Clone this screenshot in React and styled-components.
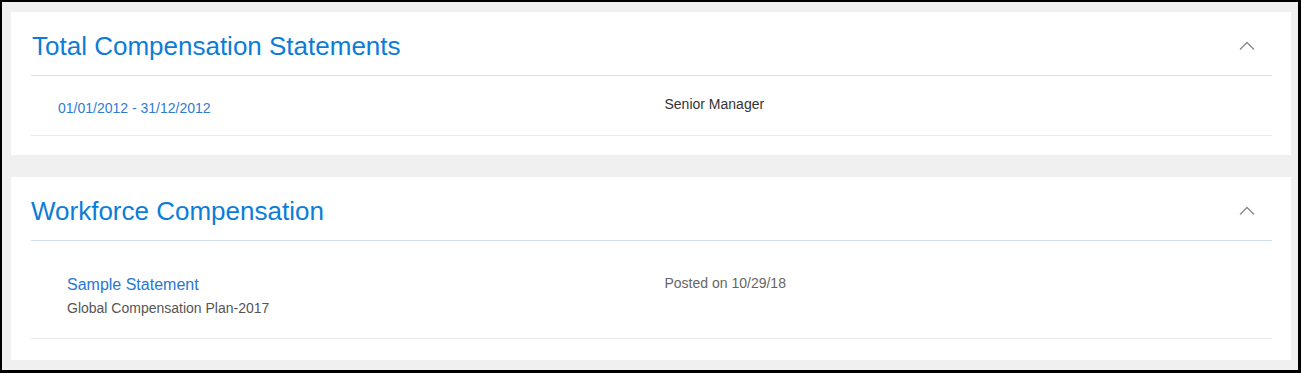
import React from "react";
import styled, { createGlobalStyle } from "styled-components";

const Global = createGlobalStyle`
  html, body { margin: 0; padding: 0; background: #000; }
  body { font-family: "Liberation Sans", Arial, sans-serif; }
  * { box-sizing: border-box; }
`;

const Frame = styled.div`
  width: 1301px;
  height: 373px;
  border-style: solid;
  border-color: #000;
  border-width: 2px 3px 3px 2px;
  background: #f0f0f0;
  padding: 10px 7px 11px 9px;
  display: flex;
  flex-direction: column;
  gap: 22px;
  overflow: hidden;
`;

const Card = styled.section`
  background: #fff;
  padding: 0 19px ${(p) => p.$bottom}px 20px;
  display: flex;
  flex-direction: column;
`;

const Header = styled.div`
  display: flex;
  align-items: center;
  justify-content: space-between;
  padding: 19px 0 14px 0;
  border-bottom: 1px solid ${(p) => p.$line};
`;

const Title = styled.h2`
  margin: 0;
  font-weight: normal;
  font-size: 26px;
  line-height: 30px;
  color: #0b7dd8;
  padding-left: ${(p) => p.$indent || 0}px;
`;

const Toggle = styled.button`
  border: 0;
  background: transparent;
  padding: 0;
  margin-right: 17px;
  width: 16px;
  height: 10px;
  display: flex;
  align-items: center;
  justify-content: center;
  cursor: pointer;
`;

const Row = styled.div`
  display: grid;
  grid-template-columns: 1fr 1fr;
  column-gap: 26px;
  border-bottom: 1px solid #e8ebee;
  min-height: ${(p) => p.$height}px;
`;

const Cell = styled.div`
  padding-top: ${(p) => p.$top}px;
  padding-left: ${(p) => p.$left || 0}px;
  display: flex;
  flex-direction: column;
`;

const Link = styled.a`
  color: ${(p) => (p.$size === 16 ? "#2777d2" : "#2f7bd2")};
  font-size: ${(p) => p.$size}px;
  line-height: ${(p) => (p.$size === 16 ? 22 : 20)}px;
  text-decoration: none;
  cursor: pointer;
`;

const Text = styled.div`
  font-size: 14px;
  line-height: 20px;
  color: ${(p) => p.$color};
  margin-top: ${(p) => p.$mt || 0}px;
`;

const Chevron = () => (
  <svg width="16" height="10" viewBox="0 0 16 10">
    <polyline
      points="1,8.5 8,1.5 15,8.5"
      fill="none"
      stroke="#8a8a8a"
      strokeWidth="1.4"
    />
  </svg>
);

export default function App() {
  return (
    <>
      <Global />
      <Frame>
        <Card $bottom={19}>
          <Header $line="#d8dfe6">
            <Title $indent={1}>Total Compensation Statements</Title>
            <Toggle aria-label="Collapse">
              <Chevron />
            </Toggle>
          </Header>
          <Row $height={60}>
            <Cell $top={22} $left={27}>
              <Link $size={14}>01/01/2012 - 31/12/2012</Link>
            </Cell>
            <Cell $top={18}>
              <Text $color="#333">Senior Manager</Text>
            </Cell>
          </Row>
        </Card>
        <Card $bottom={21}>
          <Header $line="#cfdfea">
            <Title>Workforce Compensation</Title>
            <Toggle aria-label="Collapse">
              <Chevron />
            </Toggle>
          </Header>
          <Row $height={98}>
            <Cell $top={33} $left={36}>
              <Link $size={16}>Sample Statement</Link>
              <Text $color="#555" $mt={2}>Global Compensation Plan-2017</Text>
            </Cell>
            <Cell $top={32}>
              <Text $color="#666">Posted on 10/29/18</Text>
            </Cell>
          </Row>
        </Card>
      </Frame>
    </>
  );
}
